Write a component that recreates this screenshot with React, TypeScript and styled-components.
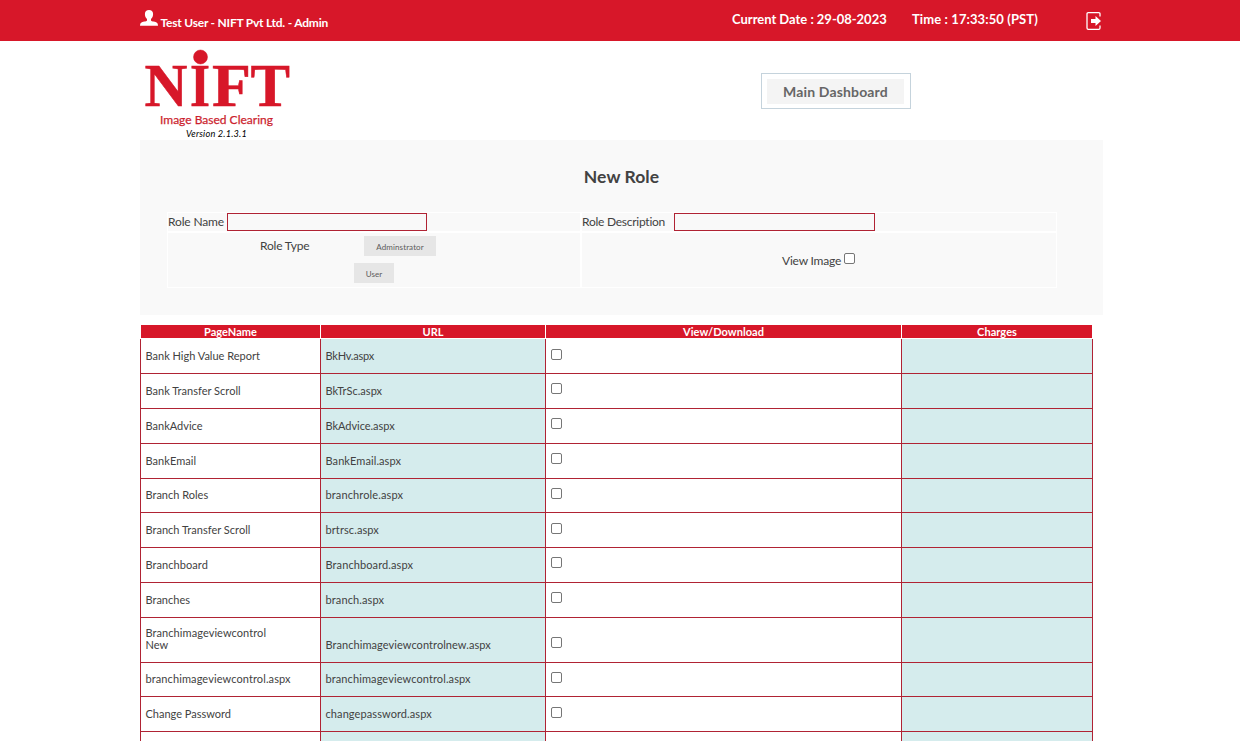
import React from "react";
import styled, { createGlobalStyle } from "styled-components";

const Global = createGlobalStyle`
  * { box-sizing: border-box; }
  html, body { margin: 0; background: #fff; }
  body { height: 741px; overflow: hidden; font-family: Lato, "Liberation Sans", sans-serif; color: #424242; }
`;

const red = "#d71729";
const line = "#b02334";

const Label = styled.span<{ $size: number; $ls?: number; $bold?: boolean; $color?: string; $italic?: boolean; $lh?: number }>`
  font-size: ${(p) => p.$size}px;
  line-height: ${(p) => (p.$lh ? `${p.$lh}px` : "1.2")};
  letter-spacing: ${(p) => p.$ls ?? 0}px;
  font-weight: ${(p) => (p.$bold ? 700 : 400)};
  font-style: ${(p) => (p.$italic ? "italic" : "normal")};
  color: ${(p) => p.$color ?? "inherit"};
  white-space: nowrap;
`;
const Tagline = styled(Label)`
  -webkit-text-stroke: 0.25px currentColor;
`;

const TopBar = styled.header`
  height: 41px;
  padding: 0 138px 0 140px;
  display: flex;
  align-items: flex-start;
  background: ${red};
  color: #fff;
`;
const UserInfo = styled.div`
  display: flex;
  gap: 2.5px;
  padding-top: 10px;
  width: 592px;
  & > span { padding-top: 6px; }
`;
const DateInfo = styled.div`
  width: 180px;
  padding-top: 12px;
  display: flex;
`;
const TimeInfo = styled.div`
  flex: 1;
  padding-top: 12px;
  display: flex;
`;
const ExitIcon = styled.svg`
  margin-top: 12px;
  display: block;
`;

const Brand = styled.section`
  height: 99px;
  padding: 0 329px 0 140px;
  display: flex;
  justify-content: space-between;
`;
const LogoBlock = styled.div`
  width: 153px;
  display: flex;
  flex-direction: column;
  align-items: center;
`;
const Logo = styled.svg`
  display: block;
  width: 153px;
  height: 72px;
  flex: none;
  overflow: visible;
`;
const DashboardFrame = styled.div`
  width: 150px;
  height: 36px;
  margin-top: 32px;
  padding: 5px 6px 4px 5px;
  border: 1px solid #c5d3dc;
`;
const DashboardButton = styled.button`
  width: 137px;
  height: 25px;
  border: 0;
  padding: 1px 0 0;
  display: flex;
  align-items: center;
  justify-content: center;
  background: #f4f4f4;
  font-family: inherit;
`;

const Panel = styled.section`
  width: 963px;
  height: 175px;
  margin-left: 140px;
  padding: 26px 0 0 27px;
  background: #f9f9f9;
`;
const Title = styled.h2`
  margin: 0;
  width: 909px;
  height: 46px;
  display: flex;
  justify-content: center;
`;
const FormGrid = styled.div`
  width: 890px;
  height: 76px;
  display: grid;
  grid-template-columns: 412px 474px;
  grid-template-rows: 18px 54px;
  gap: 2px;
  padding: 1px;
  background: #fff;
`;
const FormCell = styled.div`
  background: #f9f9f9;
  display: flex;
  align-items: center;
`;
const TextField = styled.input<{ $w: number }>`
  width: ${(p) => p.$w}px;
  height: 18px;
  margin: 0;
  padding: 0 3px;
  border: 1px solid ${line};
  border-radius: 0;
  background: #f9f9f9;
  outline: 0;
`;
const NameBox = styled.div<{ $w: number }>`
  width: ${(p) => p.$w}px;
  flex: none;
  display: flex;
`;
const RoleTypeCell = styled(FormCell)`
  align-items: flex-start;
  padding: 3px 0 0 92px;
`;
const RoleTypeLabel = styled.div`
  width: 94px;
  padding-top: 3px;
  display: flex;
`;
const RoleOptions = styled.div`
  display: flex;
  flex-direction: column;
  align-items: flex-start;
  gap: 7px;
`;
const RoleButton = styled.button<{ $w: number; $shift?: number }>`
  width: ${(p) => p.$w}px;
  height: 20px;
  margin-left: ${(p) => p.$shift ?? 0}px;
  padding: 4px 0 0;
  border: 0;
  background: #e6e6e6;
  color: #5c5c5c;
  display: flex;
  align-items: center;
  justify-content: center;
  font-family: inherit;
`;
const ImageCell = styled(FormCell)`
  align-items: flex-start;
  padding: 20px 0 0 200px;
`;
const Check = styled.input.attrs({ type: "checkbox" })`
  appearance: none;
  width: 11px;
  height: 11px;
  margin: 0;
  flex: none;
  border: 1px solid #767676;
  border-radius: 2px;
  background: #fff;
`;
const ImageLabel = styled.div`
  width: 62px;
  padding-top: 1px;
  display: flex;
`;

const Table = styled.main`
  width: 953px;
  margin: 9px 0 0 140px;
`;
const columns = "180px 225px 356px 192px";
const HeadRow = styled.div`
  display: grid;
  grid-template-columns: ${columns};
  height: 15px;
`;
const HeadCell = styled.div`
  display: flex;
  align-items: center;
  justify-content: center;
  border: solid #fff;
  border-width: 1px 0 1px 1px;
  background: ${red};
  &:last-child { border-right-width: 1px; }
`;
const Row = styled.div<{ $h: number }>`
  display: grid;
  grid-template-columns: ${columns};
  height: ${(p) => p.$h}px;
`;
const Cell = styled.div<{ $tint?: boolean }>`
  border: solid ${line};
  border-width: 0 0 1px 1px;
  padding: 0 0 11px 4.5px;
  display: flex;
  flex-direction: column;
  justify-content: flex-end;
  background: ${(p) => (p.$tint ? "#d5eced" : "#fff")};
  &:last-child { border-right-width: 1px; }
`;
const CheckCell = styled(Cell)<{ $bottom: number }>`
  padding: 0 0 ${(p) => p.$bottom}px 5px;
`;

type PageRow = { name: [string, number][]; url: string; urlLs: number; h: number; bottom: number };
const rows: PageRow[] = [
  { name: [["Bank High Value Report", 0]], url: "BkHv.aspx", urlLs: -0.22, h: 35, bottom: 13 },
  { name: [["Bank Transfer Scroll", 0.02]], url: "BkTrSc.aspx", urlLs: 0.03, h: 35, bottom: 14 },
  { name: [["BankAdvice", 0]], url: "BkAdvice.aspx", urlLs: -0.04, h: 35, bottom: 14 },
  { name: [["BankEmail", 0.05]], url: "BankEmail.aspx", urlLs: 0.08, h: 35, bottom: 14 },
  { name: [["Branch Roles", 0]], url: "branchrole.aspx", urlLs: 0.12, h: 34, bottom: 13 },
  { name: [["Branch Transfer Scroll", 0.02]], url: "brtrsc.aspx", urlLs: 0.1, h: 35, bottom: 13 },
  { name: [["Branchboard", 0.06]], url: "Branchboard.aspx", urlLs: 0.1, h: 35, bottom: 14 },
  { name: [["Branches", 0]], url: "branch.aspx", urlLs: 0.12, h: 35, bottom: 14 },
  { name: [["Branchimageviewcontrol", 0.07], ["New", 0]], url: "Branchimageviewcontrolnew.aspx", urlLs: 0.06, h: 45, bottom: 14 },
  { name: [["branchimageviewcontrol.aspx", 0.1]], url: "branchimageviewcontrol.aspx", urlLs: 0.1, h: 34, bottom: 13 },
  { name: [["Change Password", 0]], url: "changepassword.aspx", urlLs: 0.09, h: 35, bottom: 13 },
  { name: [], url: "", urlLs: 0, h: 35, bottom: 13 },
];

export default function App() {
  return (
    <>
      <Global />
      <TopBar>
        <UserInfo>
          <svg width="18" height="16" viewBox="0 0 18 16" fill="#fff">
            <path d="M9 0C6.500 0 4.900 1.500 4.900 4c0 2 .8 4 2.100 5v1.400c-.4.6-1.400.9-2.800 1.200C1.500 12.200 0 12.900 0 15.700h18c0-2.800-1.500-3.500-4.200-4.100-1.400-.3-2.400-.6-2.800-1.200V9c1.300-1 2.100-3 2.100-5C13.100 1.500 11.500 0 9 0z" />
          </svg>
          <Label $size={12} $ls={-0.22} $bold>Test User - NIFT Pvt Ltd. - Admin</Label>
        </UserInfo>
        <DateInfo><Label $size={13} $ls={-0.02} $bold>Current Date : 29-08-2023</Label></DateInfo>
        <TimeInfo><Label $size={13} $ls={0.1} $bold>Time : 17:33:50 (PST)</Label></TimeInfo>
        <ExitIcon width="16" height="18" viewBox="0 0 16 18">
          <path d="M14 4.500V2Q14 .7 12.700.7H2.300Q1 .7 1 2v14q0 1.300 1.300 1.300h10.400Q14 17.300 14 16v-2.500" fill="none" stroke="#fff" strokeWidth="1.300" />
          <path d="M5 7H9.500V4L15 9l-5.500 5v-3H5z" fill="#fff" />
        </ExitIcon>
      </TopBar>
      <Brand>
        <LogoBlock>
          <Logo viewBox="0 0 153 72" fill={red} stroke={red} strokeWidth="0.5" fontFamily="Liberation Serif, serif" fontWeight="700" fontSize="62">
            <text x="4.500" y="65" textLength="43" lengthAdjust="spacingAndGlyphs">N</text>
            <text x="50" y="65" textLength="20" lengthAdjust="spacingAndGlyphs">I</text>
            <text x="72" y="65" textLength="39" lengthAdjust="spacingAndGlyphs">F</text>
            <text x="110.500" y="65" textLength="39.500" lengthAdjust="spacingAndGlyphs">T</text>
            <circle cx="60.500" cy="16" r="7" />
          </Logo>
          <Tagline $size={12} $lh={14} $color="#cc1f2f">Image Based Clearing</Tagline>
          <Label $size={9.2} $lh={14} $ls={0.2} $italic $color="#000">Version 2.1.3.1</Label>
        </LogoBlock>
        <DashboardFrame>
          <DashboardButton><Label $size={14} $ls={0.15} $bold $color="#666">Main Dashboard</Label></DashboardButton>
        </DashboardFrame>
      </Brand>
      <Panel>
        <Title><Label $size={17.5} $lh={21} $ls={0.08} $bold>New Role</Label></Title>
        <FormGrid>
          <FormCell>
            <NameBox $w={59}><Label $size={12} $ls={-0.15}>Role Name</Label></NameBox>
            <TextField $w={200} />
          </FormCell>
          <FormCell>
            <NameBox $w={92}><Label $size={12} $ls={-0.25}>Role Description</Label></NameBox>
            <TextField $w={201} />
          </FormCell>
          <RoleTypeCell>
            <RoleTypeLabel><Label $size={12} $ls={-0.2}>Role Type</Label></RoleTypeLabel>
            <RoleOptions>
              <RoleButton $w={72} $shift={10}><Label $size={8} $ls={0.12}>Adminstrator</Label></RoleButton>
              <RoleButton $w={40}><Label $size={8}>User</Label></RoleButton>
            </RoleOptions>
          </RoleTypeCell>
          <ImageCell>
            <ImageLabel><Label $size={12} $ls={-0.2}>View Image</Label></ImageLabel>
            <Check />
          </ImageCell>
        </FormGrid>
      </Panel>
      <Table>
        <HeadRow>
          {["PageName", "URL", "View/Download", "Charges"].map((t) => (
            <HeadCell key={t}><Label $size={11} $ls={0.05} $lh={13} $bold $color="#fff">{t}</Label></HeadCell>
          ))}
        </HeadRow>
        {rows.map((r, i) => (
          <Row key={i} $h={r.h}>
            <Cell>{r.name.map(([t, ls]) => <Label key={t} $size={11} $lh={12} $ls={ls}>{t}</Label>)}</Cell>
            <Cell $tint><Label $size={11} $lh={12} $ls={r.urlLs}>{r.url}</Label></Cell>
            <CheckCell $bottom={r.bottom}>{r.url && <Check />}</CheckCell>
            <Cell $tint />
          </Row>
        ))}
      </Table>
    </>
  );
}
